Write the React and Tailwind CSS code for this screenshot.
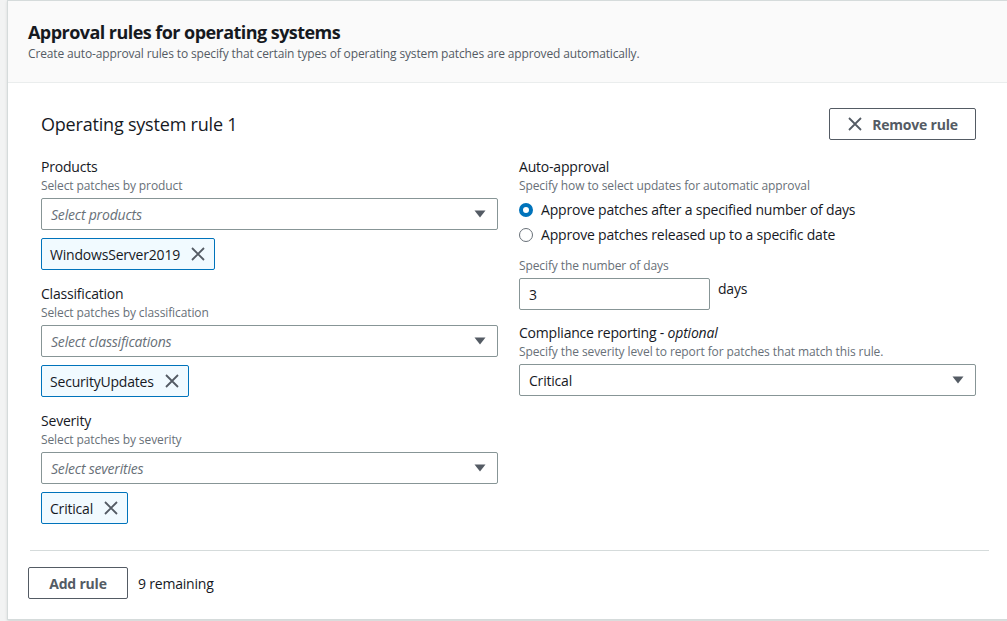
import React from 'react';

const XIcon = ({ className = '' }) => (
  <svg width="16" height="16" viewBox="0 0 16 16" className={className} fill="none">
    <path d="M2 2l12 12M14 2L2 14" stroke="currentColor" strokeWidth="1.8" />
  </svg>
);

const Caret = () => (
  <svg width="12" height="8" viewBox="0 0 12 8" className="shrink-0">
    <path d="M0.5 0.5h11L6 7.5z" fill="#545b64" />
  </svg>
);

const Select = ({ placeholder, value }) => (
  <div className="flex h-8 items-center justify-between border border-[#879596] rounded-[2px] bg-white pl-[9px] pr-[11px]">
    {value ? (
      <span className="text-[14px] text-[#16191f]">{value}</span>
    ) : (
      <span className="text-[14px] italic text-[#687078]">{placeholder}</span>
    )}
    <Caret />
  </div>
);

const Token = ({ label }) => (
  <div className="mt-2 flex">
    <div className="flex h-8 items-center gap-[10px] border border-[#0073bb] rounded-[2px] bg-[#f1faff] pl-2 pr-[8px] text-[14px] text-[#16191f]">
      <span>{label}</span>
      <XIcon className="text-[#545b64]" />
    </div>
  </div>
);

const Label = ({ children, desc }) => (
  <div>
    <div className="text-[14px] leading-5 text-[#16191f]">{children}</div>
    <div className="mt-[1px] text-[12px] leading-4 tracking-[-0.1px] text-[#687078]">{desc}</div>
  </div>
);

const MultiField = ({ label, desc, placeholder, token, className = '' }) => (
  <div className={className}>
    <Label desc={desc}>{label}</Label>
    <div className="mt-1">
      <Select placeholder={placeholder} />
    </div>
    <Token label={token} />
  </div>
);

const Radio = ({ checked, label }) => (
  <div className="flex h-[25px] items-center gap-2">
    {checked ? (
      <span className="h-[14px] w-[14px] rounded-full border-[4px] border-[#0073bb] bg-white" />
    ) : (
      <span className="h-[14px] w-[14px] rounded-full border border-[#687078] bg-white" />
    )}
    <span className="text-[14px] text-[#16191f]">{label}</span>
  </div>
);

export default function App() {
  return (
    <div
      className="min-h-screen bg-[#f2f3f3] pl-[7px] overflow-hidden tracking-[-0.2px]"
      style={{ fontFamily: '"Open Sans", "Noto Sans", sans-serif' }}
    >
      <div className="w-[1003px] bg-white border border-[#d5dbdb] shadow-sm">
        {/* Header */}
        <div className="h-[82px] bg-[#fafafa] border-b border-[#eaeded] px-5 pt-[19px]">
          <h2 className="text-[18px] leading-6 font-bold tracking-[-0.55px] text-[#16191f]">
            Approval rules for operating systems
          </h2>
          <p className="mt-[2px] text-[12px] leading-4 tracking-[-0.14px] text-[#545b64]">
            Create auto-approval rules to specify that certain types of operating system patches are approved automatically.
          </p>
        </div>

        {/* Body */}
        <div className="px-5 pt-[25px] pb-[20px]">
          <div className="px-[13px]">
            <div className="flex items-center justify-between">
              <h3 className="text-[18px] text-[#16191f]">Operating system rule 1</h3>
              <button className="flex h-8 w-[147px] items-center justify-center gap-[9px] border border-[#545b64] rounded-[2px] bg-white text-[14px] font-bold text-[#545b64]">
                <XIcon />
                Remove rule
              </button>
            </div>

            <div className="mt-[17px] grid grid-cols-2 gap-x-[21px]">
              {/* Left column */}
              <div>
                <MultiField
                  label="Products"
                  desc="Select patches by product"
                  placeholder="Select products"
                  token="WindowsServer2019"
                />
                <MultiField
                  className="mt-[14px]"
                  label="Classification"
                  desc="Select patches by classification"
                  placeholder="Select classifications"
                  token="SecurityUpdates"
                />
                <MultiField
                  className="mt-[14px]"
                  label="Severity"
                  desc="Select patches by severity"
                  placeholder="Select severities"
                  token="Critical"
                />
              </div>

              {/* Right column */}
              <div>
                <Label desc="Specify how to select updates for automatic approval">Auto-approval</Label>
                <div className="mt-[3px]">
                  <Radio checked label="Approve patches after a specified number of days" />
                  <Radio label="Approve patches released up to a specific date" />
                </div>
                <div className="mt-[11px] text-[12px] leading-4 tracking-[-0.1px] text-[#687078]">Specify the number of days</div>
                <div className="mt-1 flex items-start gap-2">
                  <div className="flex h-8 w-[191px] items-center border border-[#879596] rounded-[2px] bg-white px-[9px] text-[14px] text-[#16191f]">
                    3
                  </div>
                  <span className="pt-[1px] text-[14px] leading-5 text-[#16191f]">days</span>
                </div>
                <div className="mt-[13px]">
                  <Label desc="Specify the severity level to report for patches that match this rule.">
                    Compliance reporting - <i>optional</i>
                  </Label>
                </div>
                <div className="mt-1">
                  <Select value="Critical" />
                </div>
              </div>
            </div>
          </div>

          <div className="mt-[26px] ml-[2px] border-t border-[#d5dbdb]" />

          <div className="mt-4 flex items-center gap-[10px]">
            <button className="flex h-8 w-[100px] items-center justify-center border border-[#545b64] rounded-[2px] bg-white text-[14px] font-bold text-[#545b64]">
              Add rule
            </button>
            <span className="text-[14px] text-[#16191f]">9 remaining</span>
          </div>
        </div>
      </div>
    </div>
  );
}
